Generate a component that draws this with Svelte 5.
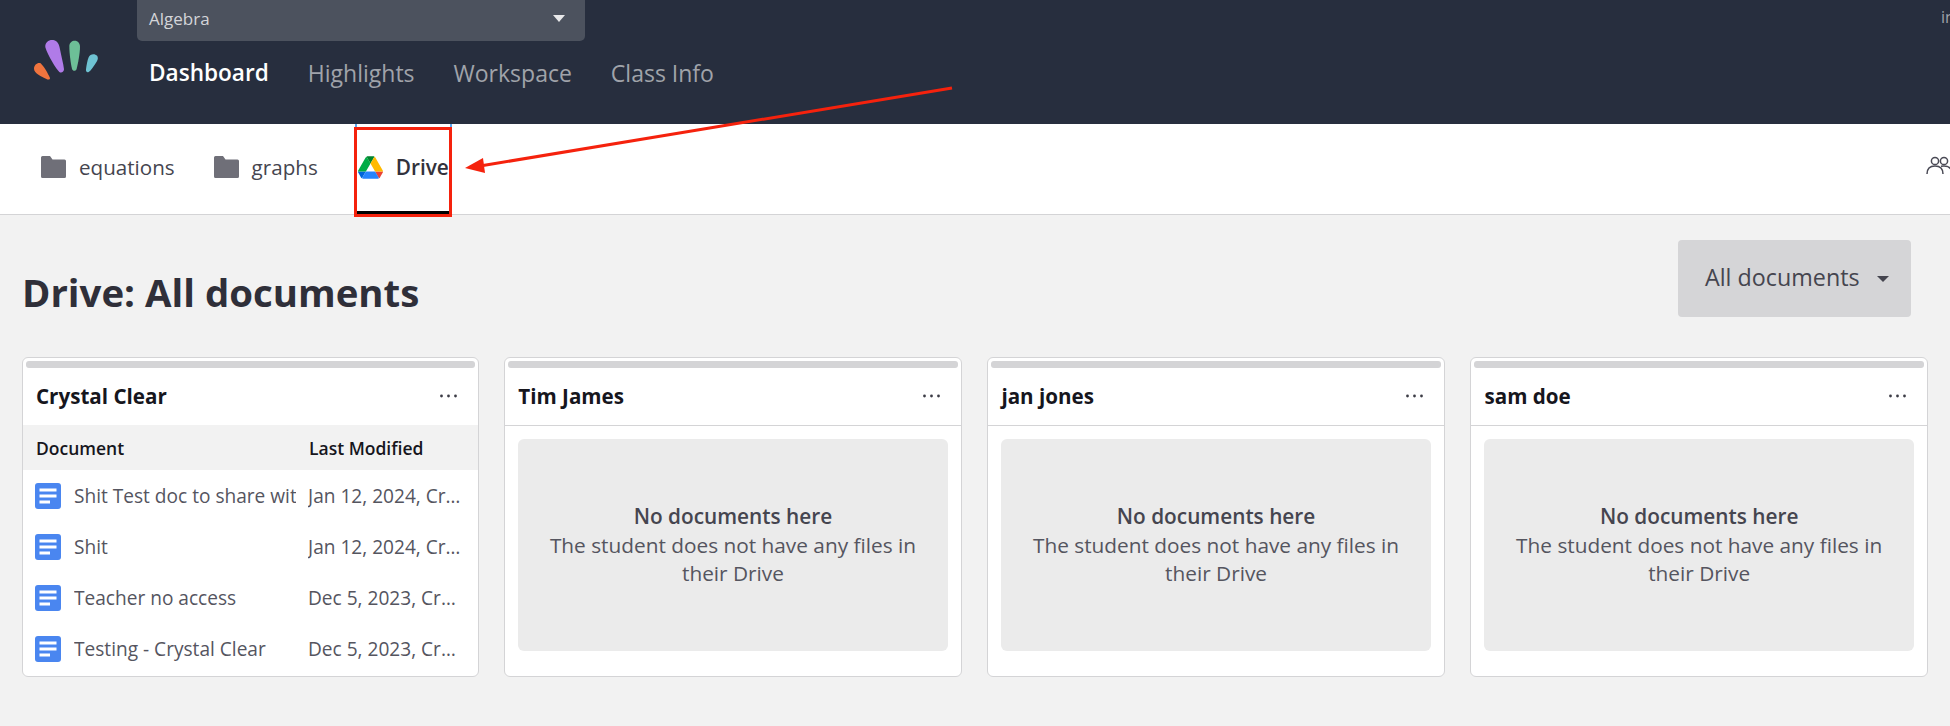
<script>
  const docs = [
    { name: 'Shit Test doc to share with teacher', mod: 'Jan 12, 2024, Crystal Clear' },
    { name: 'Shit', mod: 'Jan 12, 2024, Crystal Clear' },
    { name: 'Teacher no access', mod: 'Dec 5, 2023, Crystal Clear' },
    { name: 'Testing - Crystal Clear', mod: 'Dec 5, 2023, Crystal Clear' }
  ];
  const empties = ['Tim James', 'jan jones', 'sam doe'];
</script>

{#snippet cardHead(title)}
  <div class="grip"></div>
  <div class="card-head">
    <span class="card-title">{title}</span>
    <svg class="dots" width="17" height="4" viewBox="0 0 17 4"><circle cx="1.5" cy="2" r="1.4"/><circle cx="8.5" cy="2" r="1.4"/><circle cx="15.5" cy="2" r="1.4"/></svg>
  </div>
{/snippet}

{#snippet folder()}
  <svg class="folder" width="25" height="22" viewBox="0 0 25 22"><path d="M0 1.5A1.5 1.5 0 0 1 1.5 0H9l2.5 3.5h12A1.5 1.5 0 0 1 25 5v15.5a1.5 1.5 0 0 1-1.5 1.5h-22A1.5 1.5 0 0 1 0 20.5z" fill="#6f6f78"/></svg>
{/snippet}

<div class="page">
  <header class="top">
    <svg class="logo" width="90" height="70" viewBox="0 0 270 210">
      <path d="M76 82C74 66 88 58 100 60C114 62 118 76 120 88C124 110 130 130 132 148C132 156 124 160 118 156C108 146 84 108 76 82Z" fill="#b07be8"/>
      <path d="M148 78C148 68 156 62 164 62C174 62 180 70 180 80C180 100 174 130 170 146C168 154 158 154 156 146C152 130 148 100 148 78Z" fill="#6dbf97"/>
      <path d="M206 112C210 102 224 100 232 108C236 116 232 122 228 128C220 140 212 152 206 156C200 158 197 154 198 148C200 134 202 122 206 112Z" fill="#6fc3d3"/>
      <path d="M42 146C42 134 54 126 62 130C72 140 84 160 90 174C90 180 84 180 78 176C66 170 42 160 42 146Z" fill="#f0743e"/>
    </svg>
    <div class="top-main">
      <div class="select"><span>Algebra</span><i class="caret-light"></i></div>
      <nav class="nav">
        <span class="active">Dashboard</span>
        <span>Highlights</span>
        <span>Workspace</span>
        <span>Class Info</span>
      </nav>
    </div>
    <span class="clip-text">invite</span>
  </header>

  <div class="tabs">
    <div class="tab">{@render folder()}<span>equations</span></div>
    <div class="tab">{@render folder()}<span>graphs</span></div>
    <div class="tab current">
      <svg width="25" height="23" viewBox="0 0 87.3 78">
        <path d="m6.6 66.85 3.85 6.65c.8 1.4 1.95 2.5 3.3 3.3l13.75-23.8h-27.5c0 1.55.4 3.1 1.2 4.5z" fill="#0066da"/>
        <path d="m43.65 25-13.75-23.8c-1.35.8-2.5 1.9-3.3 3.3l-25.4 44a9.06 9.06 0 0 0-1.2 4.5h27.5z" fill="#00ac47"/>
        <path d="m73.55 76.8c1.35-.8 2.5-1.9 3.3-3.3l1.6-2.75 7.65-13.25c.8-1.4 1.2-2.95 1.2-4.5h-27.5l5.85 11.5z" fill="#ea4335"/>
        <path d="m43.65 25 13.75-23.8c-1.35-.8-2.9-1.2-4.5-1.2h-18.5c-1.6 0-3.15.45-4.5 1.2z" fill="#00832d"/>
        <path d="m59.8 53h-32.3l-13.75 23.8c1.35.8 2.9 1.2 4.5 1.2h50.8c1.6 0 3.15-.45 4.5-1.2z" fill="#2684fc"/>
        <path d="m73.4 26.5-12.7-22c-.8-1.4-1.95-2.5-3.3-3.3l-13.75 23.8 16.15 28h27.45c0-1.55-.4-3.1-1.2-4.5z" fill="#ffba00"/>
      </svg>
      <span>Drive</span>
    </div>
    <svg class="people" width="26" height="20" viewBox="0 0 26 20" fill="none" stroke="#4a4a55" stroke-width="1.5">
      <circle cx="9" cy="5" r="3.6"/><circle cx="18" cy="5" r="3.6"/>
      <path d="M1 18c0-5 3-8 8-8s8 3 8 8M15 10.3c1-.2 2-.3 3-.3 5 0 8 3 8 8"/>
    </svg>
  </div>

  <main class="content">
    <div class="title-row">
      <h1>Drive: All documents</h1>
      <div class="filter"><span>All documents</span><i class="caret-dark"></i></div>
    </div>
    <div class="cards">
      <section class="card">
        {@render cardHead('Crystal Clear')}
        <div class="row thead"><span class="c1">Document</span><span class="c2">Last Modified</span></div>
        {#each docs as d}
          <div class="row doc">
            <svg class="docicon" width="26" height="26" viewBox="0 0 26 26">
              <rect width="26" height="26" rx="3" fill="#4a86f0"/>
              <rect x="4.5" y="5.5" width="17" height="3" fill="#fff"/>
              <rect x="4.5" y="11.5" width="17" height="3" fill="#fff"/>
              <rect x="4.5" y="17.5" width="10.5" height="3" fill="#fff"/>
            </svg>
            <span class="name">{d.name}</span>
            <span class="mod">{d.mod}</span>
          </div>
        {/each}
      </section>
      {#each empties as s}
        <section class="card">
          {@render cardHead(s)}
          <div class="empty">
            <div class="empty-box">
              <strong>No documents here</strong>
              <span>The student does not have any files in their Drive</span>
            </div>
          </div>
        </section>
      {/each}
    </div>
  </main>

  <svg class="annot" width="1950" height="726" viewBox="0 0 1950 726">
    <rect x="355.5" y="128.5" width="95" height="87" fill="none" stroke="#f5220d" stroke-width="3"/>
    <line x1="952" y1="88" x2="480" y2="166" stroke="#f5220d" stroke-width="3"/>
    <polygon points="465,168 483,158 485,173" fill="#f5220d"/>
  </svg>
</div>

<style>
  :global(body) { margin: 0; }
  .page {
    position: relative;
    width: 1950px;
    height: 726px;
    overflow: hidden;
    background: #f2f2f2;
    font-family: "Open Sans", sans-serif;
    color: #45454f;
  }
  .top {
    height: 124px;
    background: #272e3e;
    display: flex;
    box-sizing: border-box;
    padding-left: 20px;
  }
  .logo { margin-top: 20px; flex: none; }
  .top-main { margin-left: 27px; display: flex; flex-direction: column; }
  .select {
    width: 448px;
    height: 41px;
    box-sizing: border-box;
    background: #4c525e;
    border-radius: 0 0 5px 5px;
    color: #d4d5d9;
    font-size: 17px;
    padding: 0 20px 5px 12px;
    display: flex;
    align-items: center;
    justify-content: space-between;
  }
  .caret-light {
    width: 0; height: 0;
    border-left: 6px solid transparent;
    border-right: 6px solid transparent;
    border-top: 7px solid #e8e8ea;
  }
  .nav {
    display: flex;
    gap: 39px;
    padding: 17px 0 0 12px;
    font-size: 23px;
    line-height: 30px;
    color: #a0a3aa;
    font-weight: 500;
  }
  .nav .active { color: #fff; font-size: 22.6px; font-weight: 600; }
  .clip-text {
    margin-left: auto;
    margin-right: -40px;
    margin-top: 6px;
    width: 49px;
    color: #a0a3aa;
    font-size: 16px;
  }
  .tabs {
    height: 90px;
    background: #fff;
    border-bottom: 1px solid #d4d4d6;
    display: flex;
    align-items: stretch;
    padding-left: 41px;
    font-size: 20.6px;
  }
  .tab { display: flex; align-items: center; gap: 13px; padding-bottom: 4px; margin-right: 39px; }
  .tab span { line-height: 28px; }
  .folder { flex: none; }
  .tab.current {
    box-sizing: border-box;
    width: 97px;
    height: 90px;
    flex: none;
    margin-left: -2px;
    margin-right: 0;
    padding: 0 0 1px 1px;
    gap: 13px;
    font-size: 20.8px;
    font-weight: 600;
    color: #32323c;
    border-left: 2px solid #5aa7f0;
    border-right: 2px solid #5aa7f0;
    border-bottom: 3px solid #000;
  }
  .people { margin-left: auto; margin-right: -2px; align-self: center; margin-top: -6px; flex: none; }
  .content { padding: 25px 39px 0 22px; }
  .title-row { display: flex; justify-content: space-between; align-items: flex-start; height: 117px; }
  h1 {
    margin: 26px 0 0;
    font-size: 38.4px;
    line-height: 52px;
    font-weight: 700;
    color: #2f2f39;
  }
  .filter {
    width: 233px;
    height: 77px;
    box-sizing: border-box;
    background: #d5d5d7;
    border-radius: 4px;
    padding: 0 22px 3px 27px;
    display: flex;
    align-items: center;
    justify-content: space-between;
    font-size: 23.3px;
    font-weight: 500;
    color: #45454f;
  }
  .caret-dark {
    width: 0; height: 0;
    margin-top: 3px;
    border-left: 6px solid transparent;
    border-right: 6px solid transparent;
    border-top: 6px solid #45454f;
  }
  .cards {
    display: grid;
    grid-template-columns: 456.5px repeat(3, 457.3px);
    column-gap: 25.8px;
  }
  .card {
    height: 320px;
    box-sizing: border-box;
    background: #fff;
    border: 1px solid #d4d4d6;
    border-radius: 6px;
    padding-top: 3px;
    overflow: hidden;
  }
  .grip {
    height: 7px;
    margin: 0 3px;
    background: #d4d4d6;
    border-radius: 3px;
  }
  .card-head {
    height: 57px;
    display: flex;
    align-items: center;
    justify-content: space-between;
    padding: 0 21px 0 13px;
  }
  .card-title { font-size: 20.6px; font-weight: 700; color: #16161d; line-height: 28px; margin-top: -1px; }
  .dots { fill: #3c3c46; margin-top: -1px; }
  .row { display: flex; align-items: center; }
  .thead {
    height: 45px;
    background: #f2f2f2;
    font-size: 17.5px;
    font-weight: 600;
    color: #16161d;
  }
  .c1 { width: 286px; padding-left: 13px; box-sizing: border-box; flex: none; }
  .doc { height: 51px; font-size: 19.1px; color: #55555f; }
  .docicon { flex: none; margin-left: 12px; }
  .name {
    margin-left: 13px;
    width: 222px;
    flex: none;
    overflow: hidden;
    white-space: nowrap;
  }
  .mod {
    margin-left: 12px;
    width: 155px;
    flex: none;
    overflow: hidden;
    white-space: nowrap;
    text-overflow: ellipsis;
  }
  .empty {
    border-top: 1px solid #d4d4d6;
    padding: 13px;
  }
  .empty-box {
    height: 212px;
    background: #ebebeb;
    border-radius: 6px;
    display: flex;
    flex-direction: column;
    align-items: center;
    justify-content: center;
    text-align: center;
    font-size: 20.8px;
    line-height: 28.5px;
    color: #55555f;
  }
  .empty-box strong { font-weight: 600; color: #45454f; }
  .empty-box span { width: 400px; }
  .annot { position: absolute; left: 0; top: 0; pointer-events: none; }
</style>
